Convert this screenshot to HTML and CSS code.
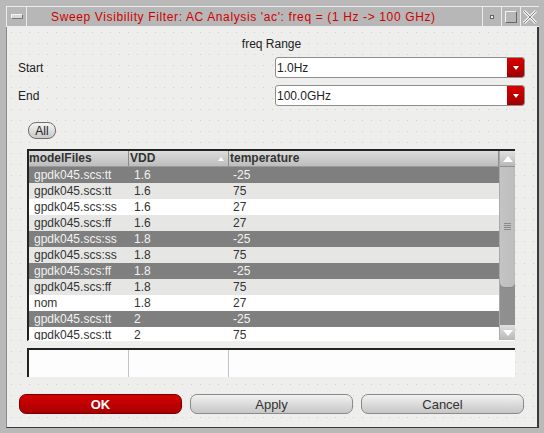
FILE: index.html
```html
<!DOCTYPE html>
<html>
<head>
<meta charset="utf-8">
<link rel="stylesheet" href="styles.css">
</head>
<body>
<div class="window">
  <div class="titlebar">
    <div class="tb-menu"><span class="menu-bar"></span></div>
    <div class="tb-title">Sweep Visibility Filter: AC Analysis 'ac': freq = (1 Hz -&gt; 100 GHz)</div>
    <div class="tb-btn"><span class="min-ico"></span></div>
    <div class="tb-btn"><span class="max-ico"></span></div>
    <div class="tb-btn">
      <svg width="16" height="16" viewBox="0 0 16 16"><path d="M2 2 L14 14 M14 2 L2 14" stroke="#f4f4f4" stroke-width="3" fill="none"/><path d="M2 2 L14 14 M14 2 L2 14" stroke="#8a8a8a" stroke-width="1" fill="none"/></svg>
    </div>
  </div>
  <div class="content">
    <div class="section-title">freq Range</div>
    <div class="form">
      <div class="label">Start</div>
      <div class="combo"><span class="combo-text">1.0Hz</span><span class="drop"><span class="tri"></span></span></div>
      <div class="label">End</div>
      <div class="combo"><span class="combo-text">100.0GHz</span><span class="drop"><span class="tri"></span></span></div>
    </div>
    <div class="all-row"><button class="btn-all">All</button></div>
    <div class="table">
      <div class="grid">
        <div class="thead">
          <div class="th">modelFiles</div>
          <div class="th th-sort">VDD<span class="sort-arrow"></span></div>
          <div class="th th-last">temperature</div>
        </div>
        <div class="tbody">
          <div class="tr sel"><span>gpdk045.scs:tt</span><span>1.6</span><span>-25</span></div>
          <div class="tr odd"><span>gpdk045.scs:tt</span><span>1.6</span><span>75</span></div>
          <div class="tr"><span>gpdk045.scs:ss</span><span>1.6</span><span>27</span></div>
          <div class="tr odd"><span>gpdk045.scs:ff</span><span>1.6</span><span>27</span></div>
          <div class="tr sel"><span>gpdk045.scs:ss</span><span>1.8</span><span>-25</span></div>
          <div class="tr odd"><span>gpdk045.scs:ss</span><span>1.8</span><span>75</span></div>
          <div class="tr sel"><span>gpdk045.scs:ff</span><span>1.8</span><span>-25</span></div>
          <div class="tr odd"><span>gpdk045.scs:ff</span><span>1.8</span><span>75</span></div>
          <div class="tr"><span>nom</span><span>1.8</span><span>27</span></div>
          <div class="tr sel"><span>gpdk045.scs:tt</span><span>2</span><span>-25</span></div>
          <div class="tr"><span>gpdk045.scs:tt</span><span>2</span><span>75</span></div>
        </div>
      </div>
      <div class="scrollbar">
        <div class="sb-btn"><span class="sb-up"></span></div>
        <div class="sb-track"><div class="sb-thumb"><span class="grip"></span></div></div>
        <div class="sb-btn"><span class="sb-down"></span></div>
      </div>
    </div>
    <div class="filter">
      <div class="fc"></div><div class="fc"></div><div class="fc fc-last"></div>
    </div>
    <div class="actions">
      <button class="btn btn-ok">OK</button>
      <button class="btn">Apply</button>
      <button class="btn">Cancel</button>
    </div>
  </div>
</div>
</body>
</html>
```
FILE: styles.css
```css
* { box-sizing: border-box; }
html, body { margin: 0; padding: 0; }
body {
  width: 544px; height: 433px; overflow: hidden;
  font-family: "Liberation Sans", Arial, sans-serif;
  font-size: 12px;
  background: #b8b8b8;
}
.window {
  width: 544px; height: 433px;
  background: #b9b9b9;
  padding: 6px 5px 5px 6px;
  display: flex; flex-direction: column;
}
.titlebar {
  height: 21px;
  display: flex;
  border-top: 1px solid #ececec;
  border-left: 1px solid #ececec;
  border-bottom: 1px solid #ececec;
  background: #b7b7b7;
}
.tb-menu {
  width: 20px;
  border-right: 1px solid #ececec;
  display: flex; align-items: center; justify-content: center;
}
.menu-bar {
  width: 12px; height: 5px;
  background: #d8d8d8;
  border: 1px solid #f4f4f4;
  border-right-color: #777; border-bottom-color: #777;
}
.tb-title {
  flex: 1;
  color: #d00000;
  padding-left: 24px;
  line-height: 20px;
  font-size: 12px;
  letter-spacing: 0.63px;
  white-space: nowrap;
  overflow: hidden;
}
.tb-btn {
  width: 19px;
  border-left: 1px solid #ececec;
  display: flex; align-items: center; justify-content: center;
}
.min-ico { width: 4px; height: 4px; background: #eee; border: 1px solid #666; }
.max-ico { width: 12px; height: 12px; border: 1px solid #f4f4f4; border-right-color: #666; border-bottom-color: #666; }
.content {
  flex: 1;
  background-color: #eeeeec;
  background-image: radial-gradient(circle, rgba(220,120,120,0.35) 0.6px, transparent 0.8px);
  background-size: 9px 11px;
  border-left: 1px solid #8a8a8a;
  display: flex; flex-direction: column;
  padding: 0 12px 0 11px;
  border-right: 2px solid #3a3a3a;
  border-bottom: 1px solid #3a3a3a;
}
.section-title {
  text-align: center;
  color: #222;
  height: 30px;
  padding-top: 10px;
  line-height: 14px;
}
.section-title, .label { background: transparent; }
.form {
  display: grid;
  grid-template-columns: 1fr 250px;
  row-gap: 7px;
  align-items: center;
}
.label { color: #222; }
.combo {
  height: 21px;
  background: #fff;
  border: 1px solid #8e8e8e;
  border-radius: 3px;
  display: flex; align-items: center;
  color: #222;
}
.combo-text { flex: 1; padding-left: 1px; }
.drop {
  width: 17px; height: 19px;
  background: linear-gradient(#d80000, #a00000);
  border-radius: 0 2px 2px 0;
  display: flex; align-items: center; justify-content: center;
}
.tri { width: 0; height: 0; border-left: 3px solid transparent; border-right: 3px solid transparent; border-top: 4px solid #fff; }
.all-row { height: 43px; padding-top: 16px; padding-left: 10px; }
.btn-all {
  width: 28px; height: 17px; padding: 0;
  font: 12px "Liberation Sans", Arial, sans-serif;
  color: #222;
  border: 1px solid #6e6e6e;
  border-radius: 8px;
  background: linear-gradient(#f4f4f4, #c8c8c8);
}
.table {
  margin-left: 9px;
  width: 488px;
  height: 192px;
  display: flex;
  border-top: 2px solid #222;
  border-left: 2px solid #222;
  border-bottom: 1px solid #fff;
  background: #fff;
}
.grid { flex: 1; overflow: hidden; }
.thead {
  display: grid; grid-template-columns: 100px 100px 1fr;
  height: 16px;
  background: linear-gradient(#dcdcdc, #bdbdbd);
  border-bottom: 1px solid #9a9a9a;
}
.th {
  font-weight: bold; color: #333; line-height: 15px;
  border-right: 1px solid #8c8c8c;
  position: relative;
}
.th-last { padding-left: 1px; }
.th-sort { padding-left: 1px; }
.sort-arrow {
  position: absolute; right: 4px; top: 6px;
  border-left: 3px solid transparent; border-right: 3px solid transparent; border-bottom: 4px solid #fff;
}
.tr {
  display: grid; grid-template-columns: 100px 100px 1fr;
  height: 16px; line-height: 16px;
  background: #ffffff; color: #333;
}
.tr.odd { background: #e6e7e5; }
.tr.sel { background: #7f7f7f; color: #f2f2f2; }
.tr span { padding-left: 5px; white-space: nowrap; }
.tr span:nth-child(3) { padding-left: 4px; }
.scrollbar {
  width: 16px;
  display: flex; flex-direction: column;
  background: #8f8f8f;
  border-left: 1px solid #aaa;
}
.sb-btn {
  height: 15px;
  background: linear-gradient(#e0e0e0, #b8b8b8);
  display: flex; align-items: center; justify-content: center;
}
.sb-up { border-left: 5px solid transparent; border-right: 5px solid transparent; border-bottom: 6px solid #fff; }
.sb-down { border-left: 5px solid transparent; border-right: 5px solid transparent; border-top: 6px solid #fff; }
.sb-track { flex: 1; padding-top: 1px; }
.sb-thumb {
  height: 121px; width: 15px;
  background: linear-gradient(90deg, #c4c4c4, #bdbdbd);
  border-radius: 0 0 5px 5px;
  border-bottom: 1px solid #888;
  position: relative;
}
.grip {
  position: absolute; left: 4px; top: 56px; width: 7px; height: 7px;
  background: repeating-linear-gradient(#8a8a8a 0 1px, transparent 1px 2px);
}
.filter {
  margin-left: 9px;
  margin-top: 7px;
  width: 488px; height: 29px;
  display: grid; grid-template-columns: 100px 100px 1fr;
  border-top: 2px solid #222;
  border-left: 2px solid #222;
  background: #fdfdfd;
}
.fc { border-right: 1px solid #c2c4c8; }
.fc-last { border-right: 0; }
.actions {
  display: grid; grid-template-columns: repeat(3, 163px);
  column-gap: 8px;
  margin-top: 17px;
  margin-left: 1px;
}
.btn {
  height: 20px; padding: 0;
  border-radius: 7px;
  border: 1px solid #8a8a8a;
  background: linear-gradient(#f2f2f2, #c6c6c6);
  color: #333;
  font: 13px "Liberation Sans", Arial, sans-serif;
}
.btn-ok {
  background: linear-gradient(#d40000, #a80000);
  border-color: #7a0000;
  color: #fff;
  font-weight: bold;
}
```
